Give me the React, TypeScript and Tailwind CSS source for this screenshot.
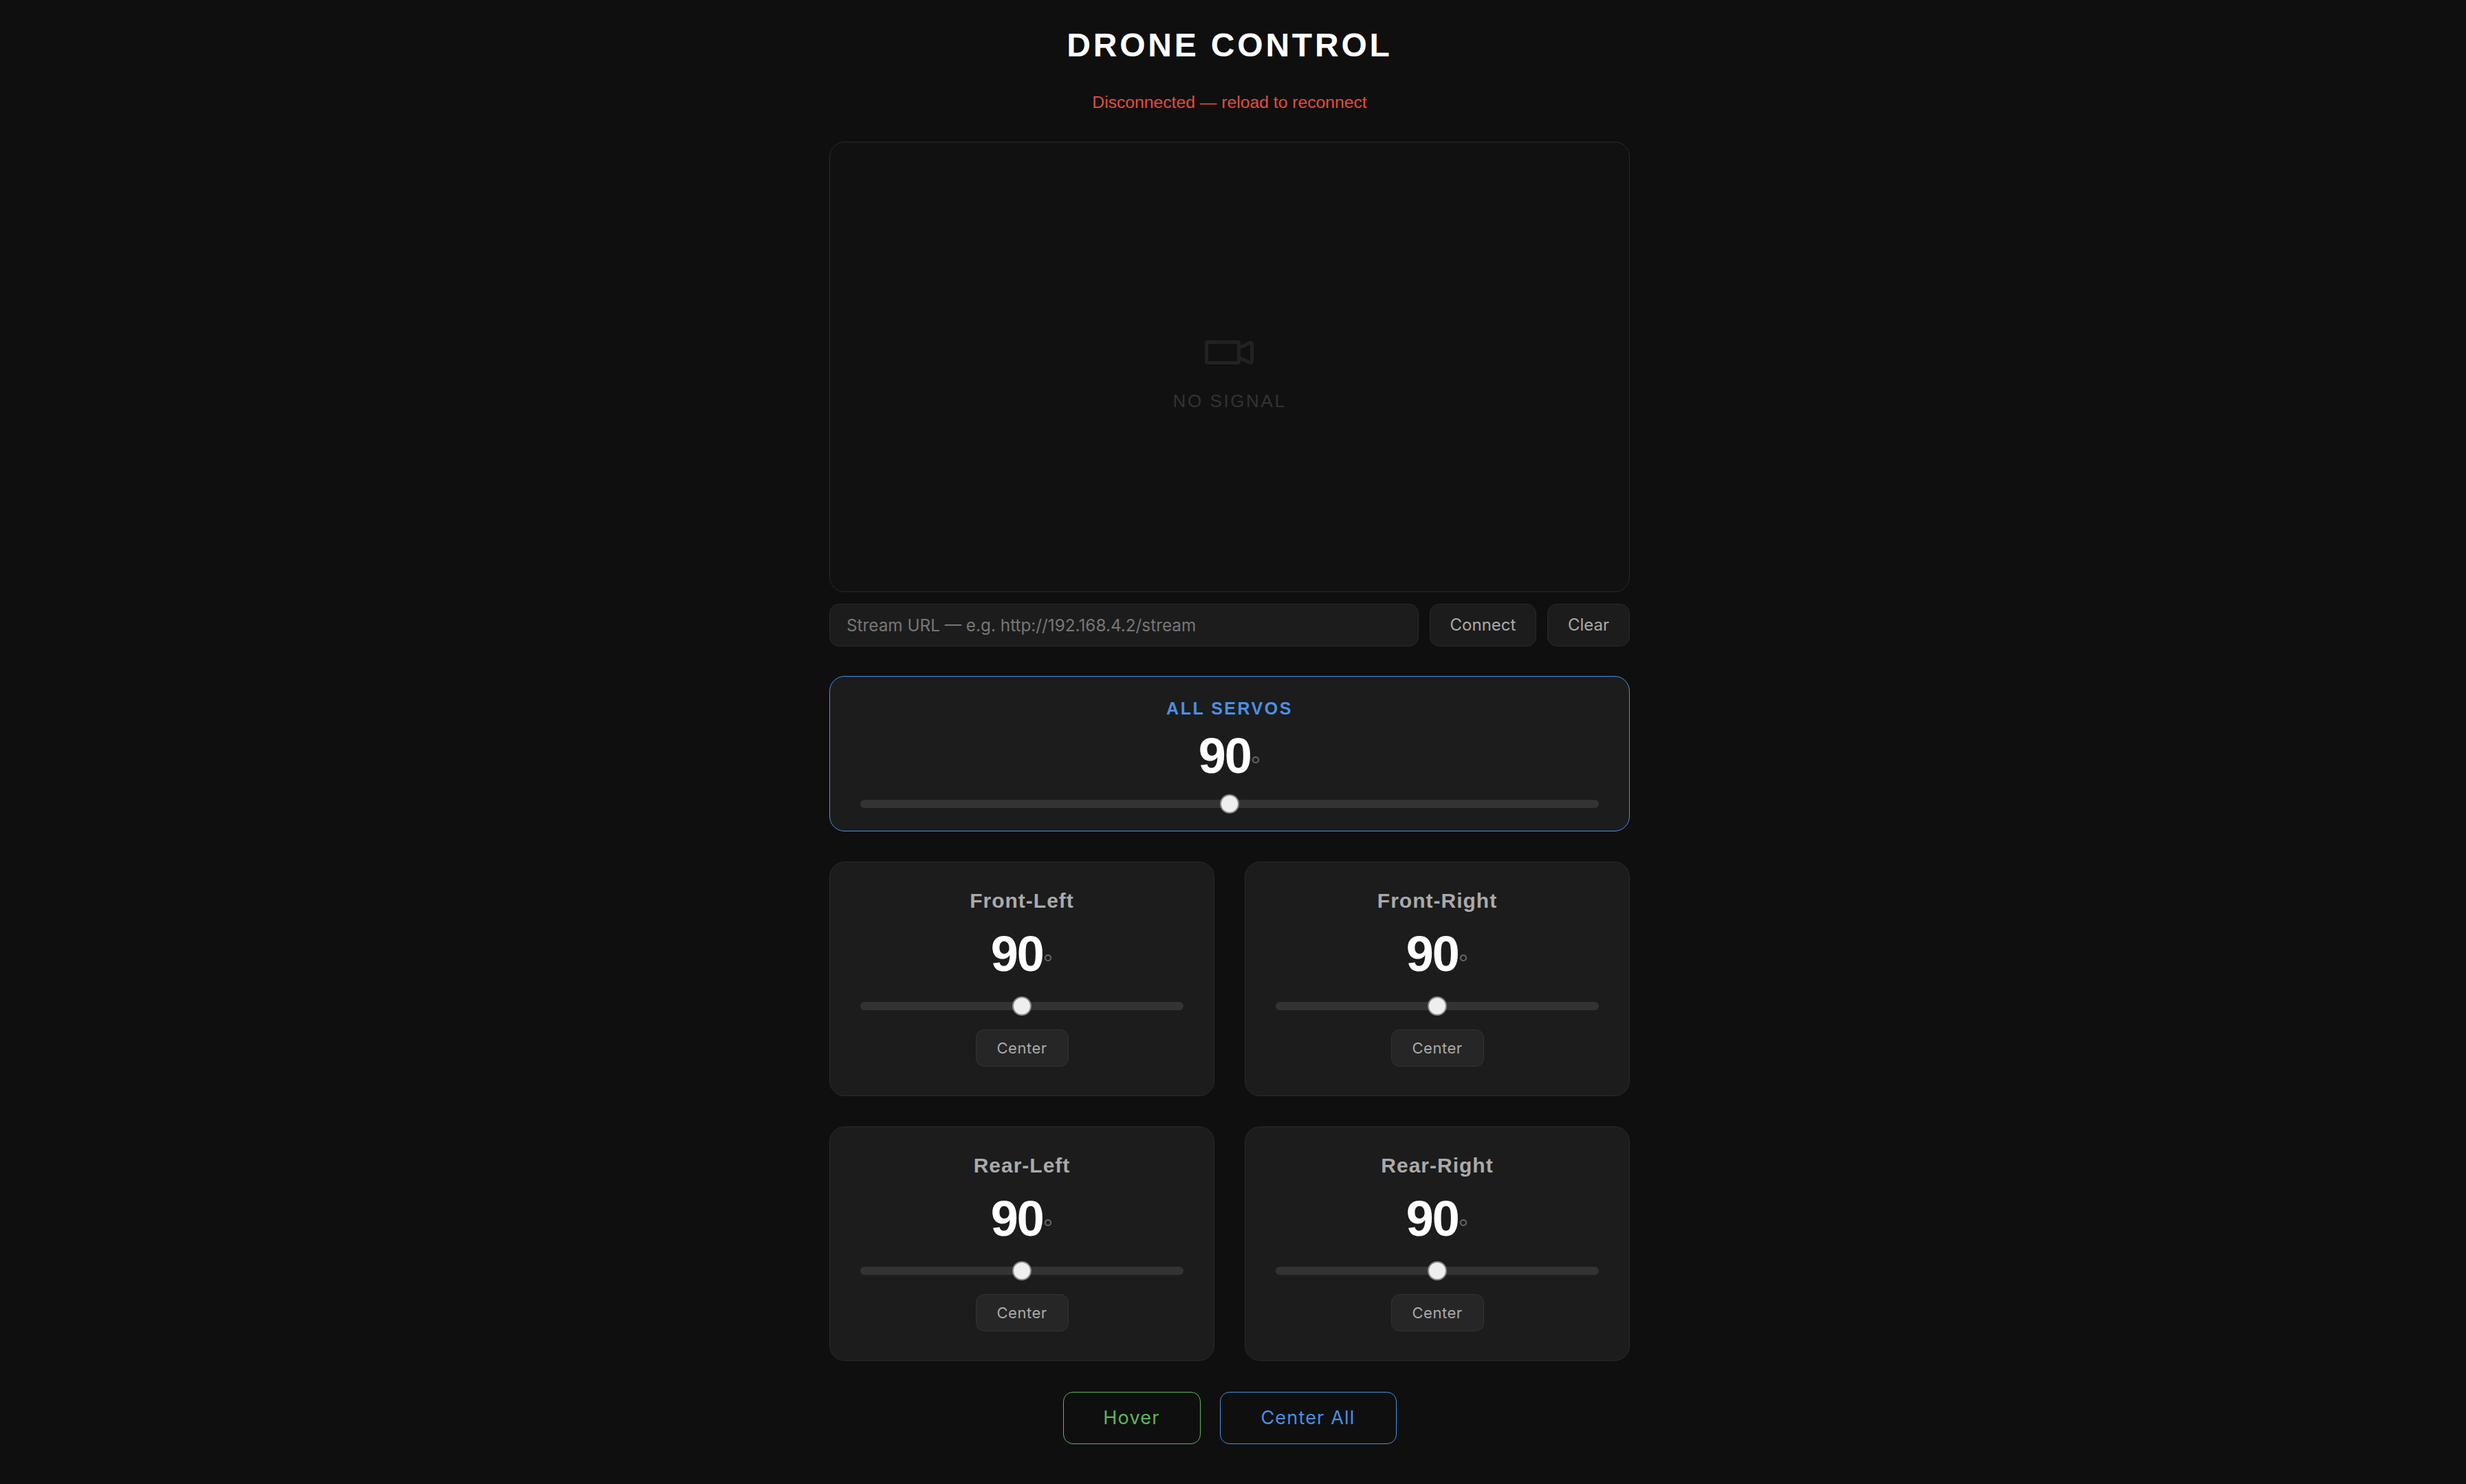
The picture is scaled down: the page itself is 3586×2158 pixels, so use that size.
import React from 'react';

const sliderClass =
  'block w-full h-[12px] appearance-none rounded-[6px] bg-[#333] outline-none cursor-pointer [&::-webkit-slider-thumb]:appearance-none [&::-webkit-slider-thumb]:w-[28px] [&::-webkit-slider-thumb]:h-[28px] [&::-webkit-slider-thumb]:rounded-full [&::-webkit-slider-thumb]:bg-[#eeeeee] [&::-webkit-slider-thumb]:border-2 [&::-webkit-slider-thumb]:border-solid [&::-webkit-slider-thumb]:border-[#888]';

const sans = 'font-["Liberation_Sans",Arial,sans-serif]';
const ui = 'font-["Inter",sans-serif]';

const servoNames = ['Front-Left', 'Front-Right', 'Rear-Left', 'Rear-Right'];

const Angle: React.FC<{ value: number }> = ({ value }) => (
  <div className={`${sans} flex items-baseline justify-center text-white font-bold text-[72px] leading-[72px] tracking-[-2px]`}>
    <span>{value}</span>
    <span className="text-[#666] font-normal text-[36px] leading-none tracking-normal relative top-[2px]">°</span>
  </div>
);

const ServoCard: React.FC<{ name: string; value: number; onChange: (v: number) => void }> = ({ name, value, onChange }) => (
  <div className="h-[341px] rounded-[22px] border border-[#2a2a2a] bg-[#1c1c1c] px-[44px] pt-[39px] flex flex-col items-center">
    <div className={`${sans} text-[#aaa] font-bold text-[30px] leading-[34px] tracking-[1px]`}>{name}</div>
    <div className="mt-[24px] w-full">
      <Angle value={value} />
    </div>
    <div className="mt-[34px] w-full">
      <input type="range" min={0} max={180} value={value} className={sliderClass} onChange={e => onChange(Number(e.target.value))} />
    </div>
    <button
      className={`${ui} mt-[28px] w-[135px] h-[54px] rounded-[12px] border border-[#333] bg-[#262626] text-[#aaa] text-[22px] tracking-[0.5px]`}
      onClick={() => onChange(90)}
    >
      Center
    </button>
  </div>
);

export default function App() {
  const [all, setAll] = React.useState(90);
  const [servos, setServos] = React.useState([90, 90, 90, 90]);

  const setEvery = (v: number) => {
    setAll(v);
    setServos([v, v, v, v]);
  };

  return (
    <div className="min-h-screen bg-[#0f0f0f] flex flex-col items-center pt-[38px] pb-[58px] pr-[10px]">
      <h1 className={`${sans} text-white font-bold text-[48px] leading-[56px] tracking-[3.8px]`}>DRONE CONTROL</h1>
      <p className={`${sans} mt-[40px] text-[#e74c3c] text-[24.7px] leading-[30px]`}>Disconnected — reload to reconnect</p>

      <div className="w-[1164px] mt-[42px]">
        {/* video */}
        <div className="h-[655px] pt-[25px] rounded-[22px] border border-[#2a2a2a] bg-[#111] flex flex-col items-center justify-center">
          <svg width="72" height="36" viewBox="0 0 72 36" fill="none" stroke="#222" strokeWidth="5" strokeLinejoin="round">
            <rect x="2.5" y="2.5" width="47" height="30" rx="1" />
            <path d="M50 11 L65.5 3.4 Q68.5 2.6 68.5 6 V29.5 Q68.5 33 65 32.2 L50 25" />
          </svg>
          <div className={`${sans} mt-[37px] text-[#333] text-[26px] leading-[30px] tracking-[2.6px]`}>NO SIGNAL</div>
        </div>

        {/* stream url */}
        <div className="flex gap-[16px] mt-[17px] h-[62px]">
          <input
            placeholder="Stream URL — e.g. http://192.168.4.2/stream"
            className={`${ui} flex-1 min-w-0 rounded-[14px] border border-[#2a2a2a] bg-[#1c1c1c] px-[24px] text-[24.3px] text-[#aaa] placeholder:text-[#777] outline-none`}
          />
          <button className={`${ui} w-[155px] rounded-[14px] border border-[#2a2a2a] bg-[#1c1c1c] text-[#aaa] text-[24px]`}>Connect</button>
          <button className={`${ui} w-[120px] rounded-[14px] border border-[#2a2a2a] bg-[#1c1c1c] text-[#aaa] text-[24px]`}>Clear</button>
        </div>

        {/* all servos */}
        <div className="mt-[43px] h-[226px] rounded-[22px] border border-[#4a90e2] bg-[#1c1c1c] px-[44px] pt-[31px] flex flex-col items-center">
          <div className={`${sans} text-[#4a90e2] font-bold text-[25px] leading-[30px] tracking-[2.5px]`}>ALL SERVOS</div>
          <div className="mt-[18px] w-full">
            <Angle value={all} />
          </div>
          <div className="mt-[28px] w-full">
            <input type="range" min={0} max={180} value={all} className={sliderClass} onChange={e => setEvery(Number(e.target.value))} />
          </div>
        </div>

        {/* individual servos */}
        <div className="grid grid-cols-2 gap-[44px] mt-[44px]">
          {servoNames.map((name, i) => (
            <ServoCard
              key={name}
              name={name}
              value={servos[i]}
              onChange={v => setServos(servos.map((s, j) => (j === i ? v : s)))}
            />
          ))}
        </div>

        {/* bottom actions */}
        <div className="flex justify-center gap-[28px] mt-[45px]">
          <button className={`${ui} w-[200px] h-[76px] rounded-[14px] border border-[#5cb85c] bg-transparent text-[#5cb85c] text-[27px] tracking-[1.2px]`}>Hover</button>
          <button
            className={`${ui} w-[257px] h-[76px] rounded-[14px] border border-[#4a90e2] bg-transparent text-[#4a90e2] text-[27px] tracking-[1.2px]`}
            onClick={() => setEvery(90)}
          >
            Center All
          </button>
        </div>
      </div>
    </div>
  );
}
